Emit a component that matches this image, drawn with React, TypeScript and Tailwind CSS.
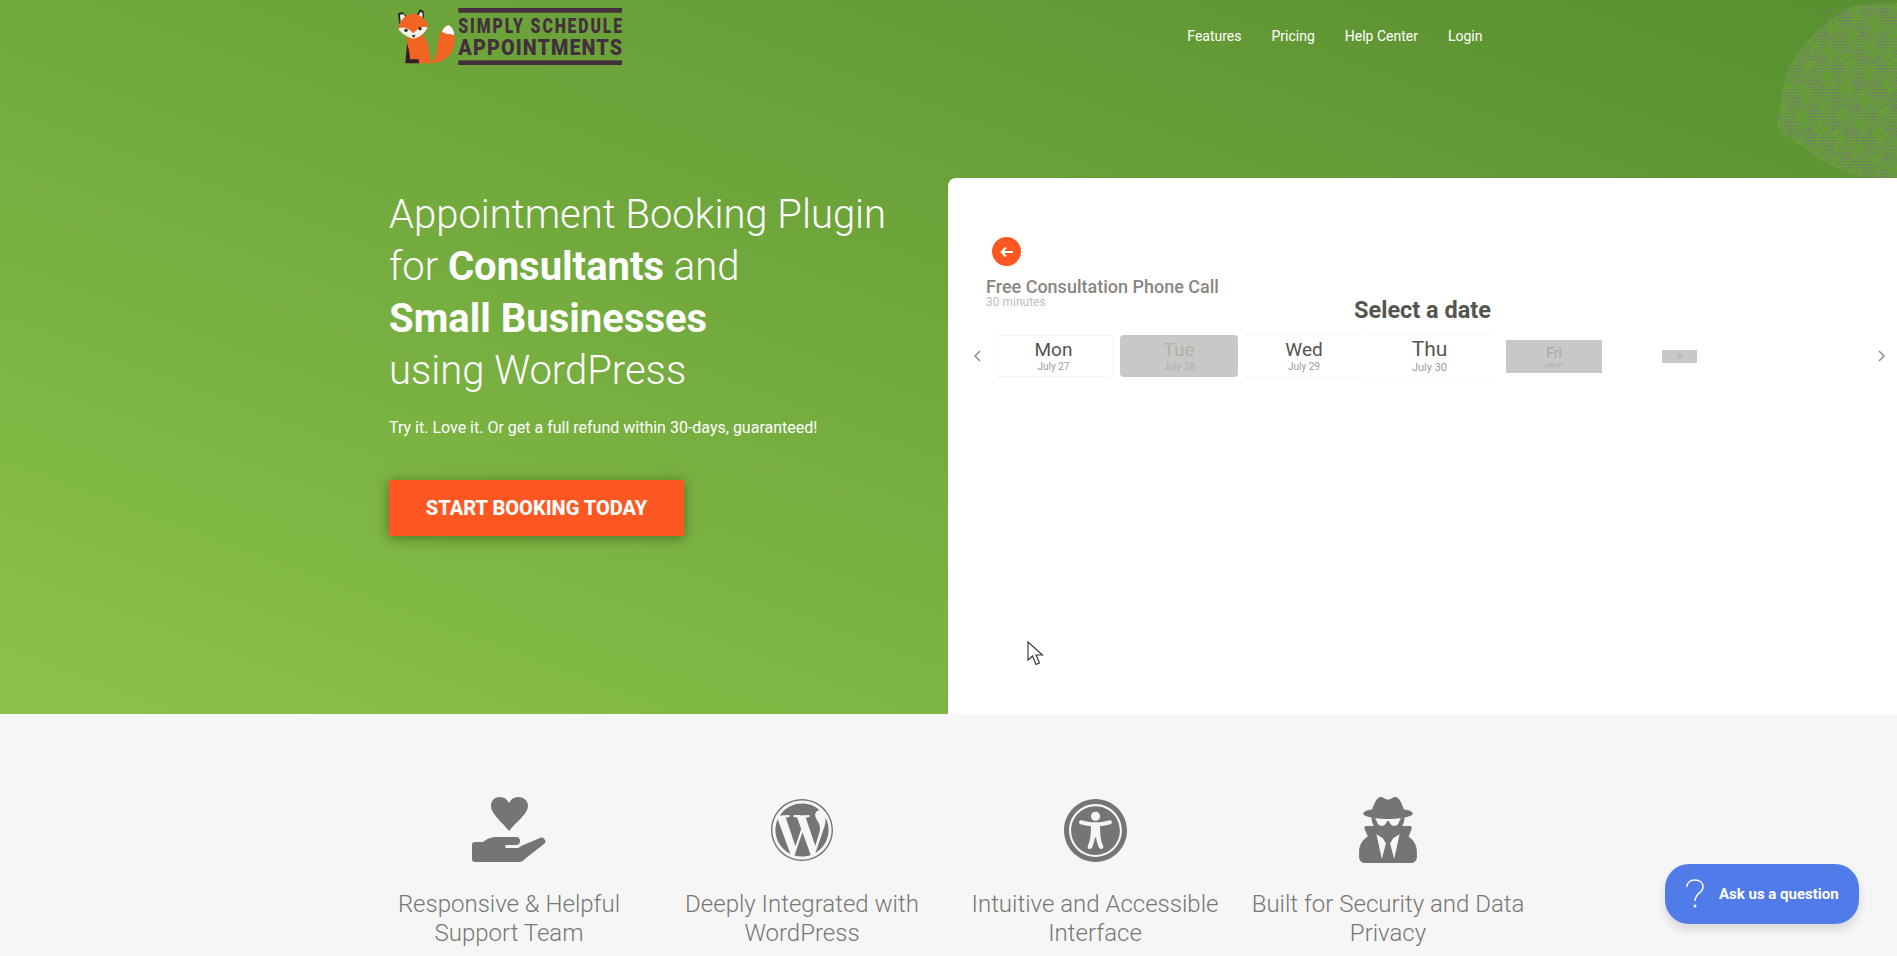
import React from "react";
import { FaWordpress, FaUniversalAccess, FaUserSecret } from "react-icons/fa";

function blobDots() {
  let d = "";
  for (let y = 2; y < 178; y += 3) {
    for (let x = 1; x < 147; x += 3) {
      const n = Math.sin(x * 0.31 + y * 0.04) + Math.sin(y * 0.23 - x * 0.13) + Math.sin((x + y) * 0.47);
      if (n > 1.1) continue;
      d += `M${x} ${y}h1.500v1.500h-1.500z`;
      if (n < -1) d += `M${x + 1.5} ${y}h1v1.500h-1z`;
    }
  }
  return d;
}

function Blob() {
  const d = blobDots();
  return (
    <svg className="absolute right-0 top-0" width="147" height="180" viewBox="0 0 147 180">
      <defs>
        <clipPath id="blob">
          <path d="M147 3 L110 5 L95 9 L80 20 L65 33 L50 50 L38 68 L32 90 L27 125 L35 135 L50 145 L70 160 L95 172 L120 178 L147 178 Z" />
        </clipPath>
      </defs>
      <g clipPath="url(#blob)">
        <rect width="147" height="180" fill="#669e37" />
        <path d={d} fill="#75786f" />
      </g>
      <path d="M62 10h1.500v1.500h-1.500zM68 10h1.500v1.500h-1.500zM74 10h1.500v1.500h-1.500zM80 8h1.500v1.500h-1.500zM84 8h1.500v1.500h-1.500zM90 6h1.500v1.500h-1.500zM94 7h1.500v1.500h-1.500zM98 5h1.500v1.500h-1.500zM78 18h1.500v1.500h-1.500zM82 16h1.500v1.500h-1.500zM87 14h1.500v1.500h-1.500z" fill="#75786f" />
    </svg>
  );
}

function Logo() {
  return (
    <svg width="260" height="80" viewBox="0 0 780 240" className="block shrink-0">
      {/* fox tail */}
      <path d="M146 190 C172 180 170 150 176 115 C180 92 193 78 205 76 C218 82 226 100 224 125 C222 160 195 190 146 190 Z" fill="#f26522" />
      <path d="M186 94 C192 80 203 74 208 76 C218 84 223 95 222 106 C210 100 198 106 186 94 Z" fill="#fff" />
      {/* body */}
      <path d="M76 190 L82 110 L130 105 C146 130 152 165 150 190 Z" fill="#f26522" />
      <path d="M76 190 L81 130 C88 150 90 170 90 178 L116 178 L118 190 Z" fill="#2d2326" />
      {/* ears */}
      <path d="M58 72 L54 40 L68 36 L82 52 Z" fill="#2d2326" />
      <path d="M108 48 L120 28 L131 34 L132 68 Z" fill="#2d2326" />
      <path d="M62 66 L60 44 L70 42 L78 54 Z" fill="#f5f0ea" />
      <path d="M114 48 L122 36 L127 38 L128 60 Z" fill="#f5f0ea" />
      {/* head */}
      <path d="M55 86 C60 55 85 38 105 42 C125 45 143 62 143 82 C135 100 118 113 101 116 C85 112 65 102 55 86 Z" fill="#f26522" />
      <path d="M55 86 C68 78 85 84 100 100 C112 84 128 76 143 82 C135 100 118 113 101 116 C85 112 65 102 55 86 Z" fill="#f7f1e8" />
      <circle cx="78" cy="91" r="5" fill="#2d2326" />
      <circle cx="120" cy="86" r="5" fill="#2d2326" />
      <path d="M95 106 L107 105 L101 114 Z" fill="#2d2326" />
      {/* wordmark */}
      <rect x="235" y="24" width="491" height="14" fill="#43303c" />
      <rect x="235" y="181" width="491" height="14" fill="#43303c" />
      <text transform="translate(235 100) scale(0.75 1)" x="0" y="0" textLength="655" fontSize="63" fontWeight="900" fill="#43303c" className="font-['Roboto']">SIMPLY SCHEDULE</text>
      <text transform="translate(235 165) scale(0.9 1)" x="0" y="0" textLength="546" fontSize="66" fontWeight="900" fill="#43303c" className="font-['Roboto']">APPOINTMENTS</text>
    </svg>
  );
}

function HandHeart() {
  return (
    <svg width="74" height="66" viewBox="0 0 74 66" fill="#757575">
      <path d="M37 34 C31 26 19 17 19 9 C19 3 23 0 28 0 C32 0 35 2 37 6 C39 2 42 0 46 0 C51 0 56 3 56 9 C56 17 43 26 37 34 Z" />
      <path d="M0 49 C0 47 1 46 3 46 L11 46 C16 42 20 41 25 41 L44 41 C47 41 48 43 48 45 C48 47 47 49 44 49 L34 49 C33 49 33 52 34 52 L44 52 C46 52 47 52 49 50 L68 42 C70 41 72 42 73 44 C74 46 73 47 72 48 L54 62 C52 64 50 66 47 66 L3 66 C1 66 0 65 0 63 Z" transform="translate(0 -1)" />
    </svg>
  );
}

function Feature({ icon, lines }: { icon: React.ReactNode; lines: string[] }) {
  return (
    <div className="flex w-[293px] flex-col items-center">
      <div className="flex h-[66px] items-center justify-center">{icon}</div>
      <p className="mt-[27px] text-center text-[24px] font-light leading-[29px] text-[#777]">
        {lines[0]}
        <br />
        {lines[1]}
      </p>
    </div>
  );
}

export default function App() {
  return (
    <div className="relative h-[956px] w-full overflow-hidden bg-[#f6f6f6] font-['Roboto',sans-serif]">
      <section className="relative flex h-[714px] flex-col bg-linear-to-tr from-[#8bc34a] to-[#588f30]">
        <Blob />
        <header className="relative mx-auto flex h-[72px] w-[1170px] items-start justify-between pl-[16px] pr-[51px]">
          <Logo />
          <nav className="flex gap-[30px] pt-[26px] text-[14px] font-normal leading-[20px] text-white">
            <span>Features</span>
            <span>Pricing</span>
            <span>Help Center</span>
            <span>Login</span>
          </nav>
        </header>
        <div className="mt-[106px] flex flex-1">
          <div className="w-[948px] shrink-0 pl-[389px] pt-[11px]">
            <h1 className="text-[40px] font-light leading-[52px] text-white">
              Appointment Booking Plugin
              <br />
              for <strong className="font-bold">Consultants</strong> and
              <br />
              <strong className="font-bold">Small Businesses</strong>
              <br />
              using WordPress
            </h1>
            <p className="mt-[19px] text-[16px] leading-[24px] text-white">Try it. Love it. Or get a full refund within 30-days, guaranteed!</p>
            <button className="mt-[40px] h-[56px] w-[295px] bg-[#ff5722] text-[20px] font-extrabold text-white shadow-[0_2px_12px_rgba(40,70,20,0.6)]">START BOOKING TODAY</button>
          </div>
          <div className="relative flex-1 rounded-tl-lg bg-white pt-[59px]">
            <div className="ml-[44px] flex h-[29px] w-[29px] items-center justify-center rounded-full bg-[#ff5722]">
              <svg width="14" height="12" viewBox="0 0 14 12" fill="none" stroke="#fff" strokeWidth="2">
                <path d="M13 6H2M6 1.500 1.500 6 6 10.500" />
              </svg>
            </div>
            <div className="ml-[38px] mt-[10px]">
              <p className="text-[18px] font-medium leading-[22px] text-[#8a8582]">Free Consultation Phone Call</p>
              <p className="-mt-[3px] text-[12px] leading-[14px] text-[#bdbdbd]">30 minutes</p>
            </div>
            <h2 className="-mt-[13px] text-center text-[23.5px] font-bold leading-[28px] text-[#55554d]">Select a date</h2>
            <div className="mt-[8px] flex h-[48px] items-center pl-[25px] pr-[11px]">
              <svg width="9" height="14" viewBox="0 0 9 14" fill="none" stroke="#8f8f8f" strokeWidth="1.500"><path d="M7 2 2 7l5 5" /></svg>
              <div className="ml-[12px] flex h-[42px] w-[119px] flex-col items-center justify-center rounded-sm border border-dotted border-[#eeeeee]">
                <span className="text-[19px] leading-[22px] text-[#55554f]">Mon</span>
                <span className="text-[10px] leading-[12px] text-[#9a9a9a]">July 27</span>
              </div>
              <div className="ml-[7px] flex h-[42px] w-[118px] flex-col items-center justify-center rounded-sm bg-[#c8c8c6]">
                <span className="text-[19px] leading-[22px] text-[#b0b2aa]">Tue</span>
                <span className="text-[10px] leading-[12px] text-[#b0b2aa]">July 28</span>
              </div>
              <div className="ml-[6px] flex h-[42px] w-[120px] flex-col items-center justify-center border-y border-dotted border-[#f0f0f0]">
                <span className="text-[19px] leading-[22px] text-[#55554f]">Wed</span>
                <span className="text-[10px] leading-[12px] text-[#9a9a9a]">July 29</span>
              </div>
              <div className="ml-[3px] flex h-[45px] w-[125px] flex-col items-center justify-center border-y border-dotted border-[#f0f0f0] pb-[2px]">
                <span className="text-[21px] leading-[24px] text-[#55554f]">Thu</span>
                <span className="text-[11px] leading-[13px] text-[#9a9a9a]">July 30</span>
              </div>
              <div className="ml-[14px] flex h-[33px] w-[96px] flex-col items-center justify-center bg-[#c8c8c6]">
                <span className="text-[14px] leading-[16px] text-[#a8aaa2]">Fri</span>
                <span className="text-[6px] leading-[7px] text-[#a8aaa2]">July 31</span>
              </div>
              <div className="ml-[60px] flex h-[13px] w-[35px] items-center justify-center bg-[#c8c8c6]">
                <span className="text-[8px] leading-[10px] text-[#a8aaa2]">S</span>
              </div>
              <svg className="ml-auto" width="9" height="14" viewBox="0 0 9 14" fill="none" stroke="#8f8f8f" strokeWidth="1.500"><path d="m2 2 5 5-5 5" /></svg>
            </div>
            <svg className="absolute left-[79px] top-[463px]" width="18" height="26" viewBox="0 0 18 26" fill="#fff" stroke="#333" strokeWidth="1.100">
              <path d="M1 1 L1 19 L5.500 15 L9 23.500 L12.500 22 L9 14 L15.500 14 Z" />
            </svg>
          </div>
        </div>
      </section>
      <section className="mx-auto flex w-[1172px] pt-[83px]">
        <Feature icon={<HandHeart />} lines={["Responsive & Helpful", "Support Team"]} />
        <Feature icon={<FaWordpress size={64} color="#757575" />} lines={["Deeply Integrated with", "WordPress"]} />
        <Feature icon={<FaUniversalAccess size={65} color="#757575" />} lines={["Intuitive and Accessible", "Interface"]} />
        <Feature icon={<FaUserSecret size={66} color="#757575" />} lines={["Built for Security and Data", "Privacy"]} />
      </section>
      <div className="absolute left-[1665px] top-[864px] flex h-[60px] w-[194px] items-center rounded-[24px] bg-[#507be9] pl-[20px] shadow-[0_6px_10px_rgba(0,0,0,0.12)]">
        <svg width="20" height="30" viewBox="0 0 20 30" fill="none" stroke="#fff" strokeWidth="1.400">
          <path d="M2 8 C2 3 6 1 10 1 C14 1 18 3 18 8 C18 14 10 14 10 22" />
          <circle cx="10" cy="27" r="0.800" fill="#fff" />
        </svg>
        <span className="ml-[14px] text-[15px] font-bold leading-[20px] text-white">Ask us a question</span>
      </div>
    </div>
  );
}
